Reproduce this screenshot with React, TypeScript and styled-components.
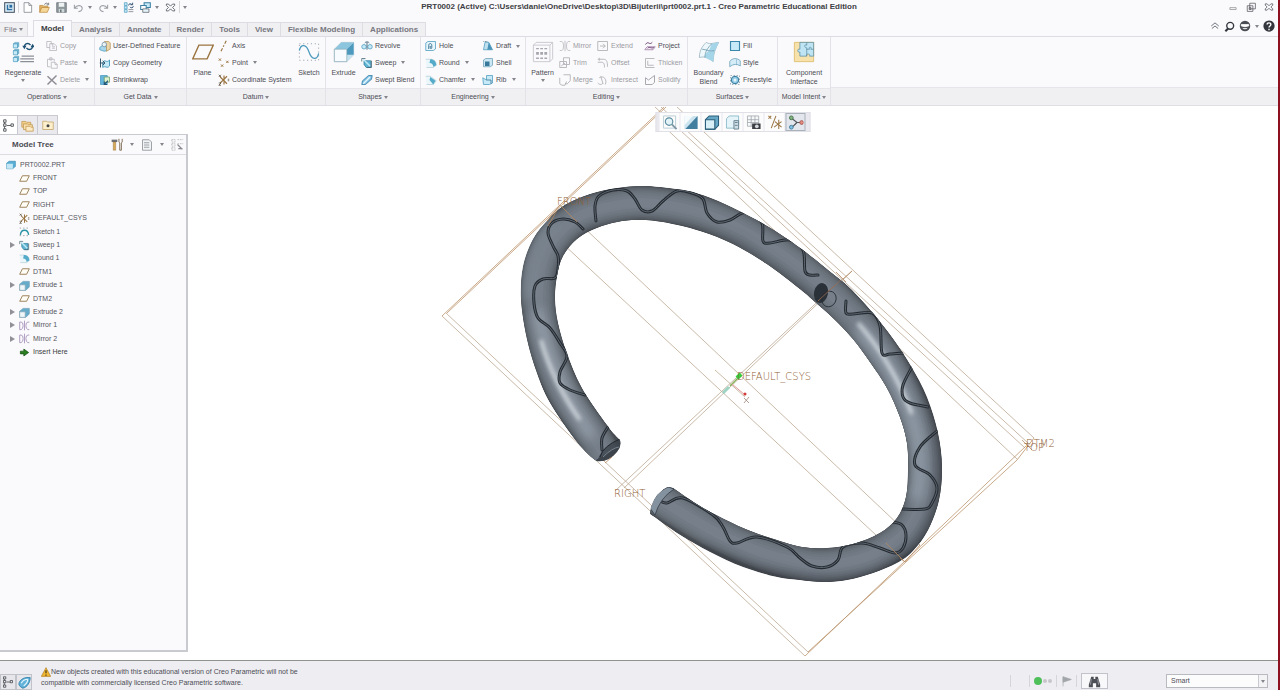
import React from 'react';
import styled, { createGlobalStyle } from 'styled-components';

const GlobalStyle = createGlobalStyle`
  * { box-sizing: border-box; }
  body { margin: 0; background: #fff; }
  button, select { font: inherit; color: inherit; }
`;

/* ---------- icons ---------- */

const Glyph = styled.svg<{ $size: number }>`
  display: block;
  flex: none;
  width: ${p => p.$size}px;
  height: ${p => p.$size}px;
  fill: none;
`;

const BLUE = '#4b9abd';
const LIGHT = '#c6eaf7';
const DARK = '#50555f';
const BROWN = '#9a7440';
const GREY = '#b2b2b8';

const drawings: Record<string, React.ReactNode> = {
  app: (<><rect x="1" y="1" width="14" height="14" fill="#dff0fa" stroke="#44515f" strokeWidth="1.5" /><rect x="4" y="4" width="8" height="8" fill="#2c6fa3" /><path d="M7 4v5h5" stroke="#fff" strokeWidth="1.5" /></>),
  newFile: <path d="M3 1h7l4 4v10H3zM10 1v4h4" fill="#fff" stroke="#70747c" />,
  open: (<><path d="M1 15V5h5l1 1h6v3" fill="#e0b368" stroke="#b98636" /><path d="M1 15l3-7h11l-3 7z" fill="#f6d79b" stroke="#b98636" /><path d="M8 4c1-3 4-3 5-1M14 1v3h-3" stroke={DARK} /></>),
  save: (<><path d="M1 1h14v14H1z" fill="#8d979c" stroke="#5e686d" /><path d="M4 1h8v6H4z" fill="#eef2f2" /><path d="M4 10h8v5H4z" fill="#cfd8d8" /><path d="M6 11h2v4H6z" fill="#5e686d" /></>),
  undo: <path d="M8 14c7-1 7-8 1-9C6 5 4 6 2 9M2 4v5h5" stroke="#9a9da3" strokeWidth="1.5" />,
  redo: <path d="M8 14C1 13 1 6 7 5c3 0 5 1 7 4M14 4v5H9" stroke="#9a9da3" strokeWidth="1.5" />,
  regenSmall: (<><path d="M2 1h4v4H2zM2 6h4v4H2zM2 11h4v4H2z" fill={LIGHT} stroke={BLUE} /><path d="M8 5c0-3 4-3 5-1M14 1v3h-3M15 6c0 3-4 3-5 1" stroke="#24476a" strokeWidth="1.3" /><path d="M8 11h7M8 14h7" stroke="#8b9097" strokeWidth="1.3" /></>),
  windows: (<><path d="M6 1h9v7H6z" fill={LIGHT} stroke="#3b7fa0" strokeWidth="1.5" /><path d="M1 5h8v6H1z" fill="#fff" stroke="#3b7fa0" strokeWidth="1.5" /><path d="M4 10h9v5H4z" fill="#e6f5fb" stroke={DARK} /></>),
  closeWin: (<><path d="M2 3h3l3 3 3-3h3v2l-3 3 3 3v2h-3l-3-3-3 3H2v-2l3-3-3-3z" stroke="#5a5e66" strokeWidth="1.3" /></>),
  minimize: <path d="M3 9h10v3H3z" stroke="#7a7a80" />,
  restore: <path d="M6 2h9v9H6zM2 6h9v9H2zM5 9h3v3H5z" stroke="#55555d" strokeWidth="1.2" />,
  chevrons: <path d="M2 8l6-5 6 5M3 12l5-4 5 4" stroke={DARK} strokeWidth="1.3" />,
  search: (<><circle cx="9" cy="7" r="5" stroke="#33363c" strokeWidth="2" /><path d="M6 11l-4 4" stroke="#33363c" strokeWidth="3" /></>),
  community: (<><circle cx="8" cy="8" r="7" fill="#4a4d53" /><path d="M3 6h10v2c-2 0-3 1-5 1S5 8 3 8zM5 11c2 1 4 1 6 0" fill="#fff" stroke="#fff" /></>),
  help: (<><circle cx="8" cy="8" r="7.5" fill="#33363c" /><path d="M5.500 6c0-3 5-3 5 0 0 2-2.500 2-2.500 4M8 11.500v2" stroke="#fff" strokeWidth="1.8" /></>),
  regenerate: (<><path d="M1 2h3v3H1zM1 7h3v3H1zM1 12h3v3H1z" fill={LIGHT} stroke={BLUE} strokeWidth=".5" /><path d="M1 2l1-1h3v3l-1 1V2zM1 7l1-1h3v3l-1 1V7zM1 12l1-1h3v3l-1 1v-3z" fill="#6fb2d0" stroke={BLUE} strokeWidth=".3" /><path d="M9 4.500c0-3 3-3.500 4.500-1.500M15 3.500c0 3-3 3.500-4.500 1.500" stroke="#1f5275" strokeWidth="1" /><path d="M7.500 3.500h3L9 6zM13.500 4.500h3L15 2z" fill="#1f5275" /><path d="M7 11h9M6 13h10M6 15h10" stroke="#8b9097" strokeWidth=".8" /></>),
  copy: <path d="M1 2h6v3h2v3M1 2v8h4M5 5h6l3 3v6H5zM8 9h4M8 11h4" stroke={GREY} />,
  paste: <path d="M2 3h9v3M2 3v10h4M5 1h3v3H5zM7 7h5l3 3v5H7zM12 7v3h3" stroke={GREY} />,
  del: <path d="M2 3l12 11M14 2L2 14" stroke="#8e8e94" strokeWidth="2" />,
  udf: (<><path d="M1 10l4-3 6 3v4l-4 1-6-2z" fill="#a6d6ec" stroke={BLUE} /><path d="M7 2h6l2 2v8l-5 3V5z" fill="#edd5a7" stroke="#b0935b" /><circle cx="7" cy="6" r="3" fill="#e9f1f6" stroke="#7090a8" /></>),
  copyGeom: (<><path d="M5 7c3-5 5 2 9-3v8c-3 4-6-1-9 2z" fill={LIGHT} stroke={BLUE} strokeWidth="1.300" /><path d="M2 2v12M1 8h6M5 5l3 3-3 3" stroke="#33566e" strokeWidth="1.300" /></>),
  shrink: (<><path d="M2 2h9v12H2z" fill="#65b5dc" stroke={BLUE} /><path d="M7 4h7v7H7z" fill="#def1cf" stroke="#6c9a67" /><path d="M12 9l-5 5M11 14H7v-4" stroke="#24587a" strokeWidth="1.500" /></>),
  plane: <path d="M5 3h10.500L11 13H.500z" stroke={BROWN} />,
  planeSmall: <path d="M5 4h10l-4 8H1z" stroke="#9b8058" strokeWidth="1.400" fill="#fffdf5" />,
  axis: <path d="M11 1L9 5M8 7L7 9M6 11l-2 4" stroke={BROWN} strokeWidth="1.500" />,
  point: <path d="M1 2l3 3M4 2L1 5M11 5l3 3M14 5l-3 3M4 10l3 3M7 10l-3 3" stroke={BROWN} strokeWidth="1.300" />,
  csys: (<><path d="M8 2v12M3 4l9 9M12 3L3 12" stroke={BROWN} strokeWidth="1.500" /><path d="M1 1l3 3M4 1L1 4M13 7h2M13 9h2M1 12h3l-3 3h3" stroke="#54462e" /></>),
  sketch: (<><path d="M1 2h14v12H1z" stroke="#8a929c" strokeWidth=".6" strokeDasharray=".8 2" /><path d="M1 7c1-5 5-5 7 1s6 6 7 1" stroke={BLUE} strokeWidth=".9" /></>),
  sketchSmall: (<><path d="M2 13C3 4 13 4 14 13" stroke="#2a93a5" strokeWidth="2" /><path d="M1 3h14M1 14h14" stroke="#778" strokeDasharray="2 3" /></>),
  extrude: (<><path d="M1 6l5-5h9v9l-5 5H1z" fill="#dceff7" stroke="#9fb8c4" strokeWidth=".5" /><path d="M6 1h9l-5 5H1z" fill="#8cc5de" /><path d="M15 1v9l-5 5V6z" fill="#c3e2ee" /><path d="M15 1v9h-5V6z" fill="#4d99bd" /><path d="M1 6h9v9H1z" fill="#f7fbfd" stroke="#8ba9b7" strokeWidth=".5" /></>),
  extrudeSmall: (<><path d="M1 6l5-4h9v8l-5 5H1z" fill="#67abca" stroke="#6b9fb8" /><path d="M1 7h8v8H1z" fill="#f0f7fa" stroke="#8aa7b5" /></>),
  revolve: (<><circle cx="4" cy="9" r="3" fill={LIGHT} stroke={BLUE} /><circle cx="12" cy="9" r="3" fill={LIGHT} stroke={BLUE} /><path d="M8 3v10M5 4c1-2 5-2 6 0" stroke="#43627a" strokeWidth="1.200" /></>),
  sweep: (<><path d="M4 5h9v9H7l-3-4z" fill="#5fb4d4" stroke="#2f7c9c" /><path d="M3 3l9 9" stroke="#bfe9f6" strokeWidth="2" /><path d="M1 2h5M1 2v4M14 5v9H8" stroke="#44606f" /></>),
  blend: (<><path d="M1 14l1-5L10 2h5l-1 5-8 7z" fill="#7fbfe0" stroke="#2f78a4" /><path d="M3 13l9-9" stroke="#e8f7fd" strokeWidth="2" /></>),
  hole: (<><path d="M1 4l3-2h10v10l-3 2H1z" fill="#e6f6fc" stroke={BLUE} /><path d="M5 12V7c0-3 4-3 4 0v3c0 2-2 2-2 0V8" stroke="#2d6a8c" strokeWidth="1.200" /></>),
  round: (<><path d="M1 3h6c5 0 8 3 8 8l-4 3H2" fill="#eaf6fa" stroke="#9fc2cf" strokeWidth=".8" /><path d="M7 3c5 0 8 3 8 8l-4 2c0-3-2-5-5-5z" fill="#54abc9" /></>),
  chamfer: (<><path d="M1 3h6l8 6-4 5H2" fill="#eaf6fa" stroke="#9fc2cf" strokeWidth=".8" /><path d="M7 4l7 5-3 5-5-6z" fill="#54abc9" /></>),
  draft: (<><path d="M2 13l2-10h5l5 10z" fill="#bfe0ef" stroke={BLUE} /><path d="M9 3l5 10H7z" fill="#4993b9" /><path d="M2 2h6" stroke="#39586c" strokeDasharray="1 1" /></>),
  shell: (<><path d="M2 4l3-2h9v9l-3 2H2z" fill="#cbe7f3" stroke="#6d9eb5" /><path d="M4 6h6v6H4z" fill="#38799b" /></>),
  rib: (<><path d="M1 5l5 3V2h8v10l-4 2H2z" fill={LIGHT} stroke={BLUE} /><path d="M6 8h6v5" stroke="#2d6a8c" /></>),
  pattern: (<><path d="M1 3l2-2h12v12l-2 2H1zM1 3h12v12M13 3l2-2" stroke="#c1c1c8" strokeWidth=".6" /><path d="M3 5h2v1H3zM6 5h2v1H6zM9 5h2v1H9zM3 8h2v2H3zM6 8h2v2H6zM9 8h2v2H9zM3 12h2v1H3zM6 12h2v1H6zM9 12h2v1H9z" fill="#a6a6ae" /></>),
  mirrorG: <path d="M1 2h2q3 0 3 6t-3 6H1M15 2h-2q-3 0-3 6t3 6h2M8 1v14" stroke={GREY} />,
  mirrorP: <path d="M1 3h2q3 0 3 5t-3 6H1zM15 3h-2q-3 0-3 5t3 6h2M8 1v14" stroke="#9a83b0" strokeWidth="1.100" />,
  extend: <path d="M1 2h13v12H1zM4 8h7M8 5l3 3-3 3" stroke={GREY} strokeWidth="1.200" />,
  trim: <path d="M6 1h8v9H6zM1 6h9v8H1zM3 12l5-4" stroke={GREY} strokeWidth="1.200" />,
  offset: <path d="M1 3h8c4 0 5 4 5 10M1 7h5c3 0 4 2 4 7M3 1v4" stroke={GREY} strokeWidth="1.200" />,
  merge: <path d="M6 1h9v8l-4 4H8M1 5v8l3 2h4l2-5" stroke={GREY} strokeWidth="1.200" />,
  intersect: <path d="M3 5c6-4 11 3 8 9M1 12c3 3 6 2 7 0M5 3l3 10" stroke={GREY} strokeWidth="1.200" />,
  project: (<><path d="M1 13l3-4h11l-3 4z" fill="#f3ebf5" stroke="#9b79a3" /><path d="M2 6c4-6 5 2 9-3M5 11c2-3 5 1 8-1" stroke="#67416f" strokeWidth="1.300" /></>),
  thicken: <path d="M14 2H2v12h12M5 5v6h8" stroke={GREY} strokeWidth="1.200" />,
  solidify: <path d="M2 5l4 3 8-6v9l-3 3H2z" stroke="#9e9ea6" strokeWidth="1.200" />,
  boundary: (<><path d="M1 12C1 6 4 3 6 1c3 2 6 0 9 0-2 4-4 8-4 14-3-3-6-4-10-3z" fill="#eef8fb" stroke="#8ba9b8" strokeWidth=".5" /><path d="M8 7c2 1 4 0 5-1l2-5c-3 0-4 1-5 1zM5 12c0-2 1-4 3-5l4 0-1 8z" fill="#a5d5e8" /><path d="M3 6c3 0 5 2 9 1M5 12c0-4 2-7 5-10" stroke="#578ba5" strokeWidth=".5" /></>),
  fill: <path d="M2 2h12v12H2z" fill={LIGHT} stroke="#3b87a9" strokeWidth="1.500" />,
  style: (<><path d="M1 13V6c3-5 10-5 14-1v7c-4-3-9-3-14 1z" fill="#d6edf7" stroke="#639ab5" /><path d="M10 3v8" stroke="#639ab5" strokeWidth=".6" /></>),
  freestyle: (<><path d="M2 2h12v12H2z" stroke="#8598a5" strokeDasharray="2 2" /><circle cx="8" cy="8" r="5" fill="#92cbe5" stroke="#2d7396" strokeWidth="1.300" /><circle cx="8" cy="8" r="2" fill="#e8f6fb" /></>),
  component: (<><path d="M1 1h14v14H1z" fill="#f8e2ab" stroke="#dcb968" strokeWidth=".6" /><path d="M5 1h10v10h-3c1-2-3-2-2 0H5V8c-2 1-2-3 0-2z" fill="#bfe5f4" stroke="#53849a" strokeWidth=".5" /><path d="M10 1v2c-2-1-2 2 0 2v6M10 6h2c-1-2 2-2 1 0h2" stroke="#53849a" strokeWidth=".5" /></>),
  treeTab: <path d="M2 1h3v3H2zM2 6h3v3H2zM2 12h3v3H2zM11 6h3v3h-3zM3 4v2M3 9v3M6 8h5" stroke="#3e4248" strokeWidth="1" />,
  folders: (<><path d="M1 3h5l1 1h5v6H1z" fill="#f3d08e" stroke="#c39b58" /><path d="M3 6h5l1 1h5v6H3z" fill="#fae0ab" stroke="#c39b58" /><path d="M6 9h5l1 1h3v5H6z" fill="#fdebc6" stroke="#c39b58" /></>),
  favorites: (<><path d="M1 3h5l1 1h8v10H1z" fill="#fdf0cd" stroke="#c0a263" /><circle cx="8" cy="9" r="2" fill="#444" /></>),
  tools: (<><path d="M2 2h7v3H2z" fill="#6d7074" /><path d="M4 5h3v10H4z" fill="#d8a95a" stroke="#8a6528" strokeWidth=".5" /><path d="M11 1v4l1 1v9h2V6l1-1V1" stroke="#77634a" strokeWidth="1.100" /></>),
  settings: <path d="M2 1h9l3 3v11H2zM4 5h7M4 8h7M4 11h7" fill="#f1f3f4" stroke="#82878d" />,
  filter: (<><path d="M1 2h4v3H1zM1 7h4v3H1zM1 12h4v3H1zM8 2h7M8 7h7" stroke="#b5b5bb" strokeDasharray="2 1" /><path d="M8 8l6 6M9 13h5" stroke="#88888e" strokeWidth="1.500" /></>),
  part: (<><path d="M1 5l4-3h10v8l-4 4H1z" fill="#58aed5" stroke="#3587ae" /><path d="M1 6h10v8H1z" fill="#c3e7f5" /></>),
  insert: <path d="M2 6h5V3l7 5-7 5v-3H2z" fill="#2a7f21" stroke="#124d0d" />,
  zoomFit: (<><path d="M1 1h13v13H1z" stroke="#b9ccd4" /><circle cx="7" cy="7" r="4" fill="#e2f3f8" stroke="#5a8c9e" strokeWidth="1.200" /><path d="M10 10l5 5" stroke="#7f98a5" strokeWidth="2" /></>),
  repaint: (<><path d="M1 1h14v14H1z" fill="#cbe4ef" /><path d="M15 1v14H2z" fill="#437f9f" /><path d="M1 1h9L1 11z" fill="#f5fafc" /></>),
  shade: (<><path d="M1 5l4-4h10v10l-4 4H1z" fill="#68a8c7" stroke="#2b5f7b" strokeWidth="1.200" /><path d="M1 5h10v10H1z" fill="#d8eff8" stroke="#2b5f7b" strokeWidth="1.200" /></>),
  views: (<><path d="M1 4l3-3h10v10l-3 3H1z" fill="#e4f4f9" stroke="#8dbccd" /><path d="M9 6h5v9H9zM10 8h3M10 11h3" fill="#d0dfe5" stroke="#65808e" /></>),
  viewMgr: (<><path d="M1 1h12v11H1zM1 5h12M5 1v11M1 8h12M9 1v11" fill="#f8fafa" stroke="#9ba2a8" strokeWidth=".8" /><path d="M6 9h9v6H6z" fill="#3b3e44" /><circle cx="11" cy="12" r="2" fill="#d5d8da" /></>),
  datums: <path d="M1 1l3 3M4 1L1 4M9 1L4 14M12 5v10M8 7l7 6M15 7l-8 6" stroke={BROWN} strokeWidth="1.100" />,
  spin: (<><path d="M4 4l5 4h5M9 8l-5 5" stroke="#53575d" strokeWidth="1.300" /><circle cx="3" cy="3" r="2" fill="#7db87b" stroke="#4b7050" /><circle cx="14" cy="8" r="2" fill="#e58c82" stroke="#a3564f" /><circle cx="3" cy="13" r="2" fill="#82c0e2" stroke="#4a7f9f" /></>),
  warn: (<><path d="M8 1l7.500 14H.500z" fill="#f2b632" stroke="#a8781c" /><path d="M8 5v5M8 12v2" stroke="#3b2f12" strokeWidth="1.800" /></>),
  browser: (<><path d="M1 10C2 4 8 1 15 2c0 6-4 12-9 13-2-1-4-2-5-5z" fill="#62b2da" stroke="#2a7ba5" /><path d="M4 9c2-4 5-5 8-5M7 12c3-2 5-4 5-8" stroke="#e5f6fd" strokeWidth="1.500" /></>),
  flag: <path d="M3 1v14M3 1l12 4-12 4z" fill="#a2a5a9" stroke="#a2a5a9" />,
  binoculars: (<><path d="M4 2h3v3h2V2h3l3 10v3h-5v-5H6v5H1v-3z" fill="#4c4f55" /><path d="M4 5l-1 7M12 5l1 7" stroke="#a4a8ae" /></>),
};

const Icon = ({ name, size = 12 }: { name: string; size?: number }) => (
  <Glyph viewBox="0 0 16 16" $size={size} aria-hidden="true">{drawings[name]}</Glyph>
);

const Caret = styled.span`
  flex: none;
  width: 0;
  height: 0;
  border: 2px solid transparent;
  border-top: 3px solid #85858c;
  border-bottom: 0;
`;

/* ---------- frame ---------- */

const Window = styled.div`
  display: flex;
  flex-direction: column;
  min-height: 100vh;
  border-right: 2px solid #8d1021;
  background: #fafafc;
  color: #4c4c54;
  font: 7px/10px "Liberation Sans", Arial, sans-serif;
`;

const TitleBar = styled.header`
  display: grid;
  grid-template-columns: 1fr auto 1fr;
  align-items: center;
  height: 14px;
  padding: 0 4px;
`;

const Title = styled.h1`
  margin: 0;
  font-size: 8px;
  line-height: 12px;
  font-weight: bold;
  color: #3e3e44;
`;

const Divider = styled.span<{ $space?: number }>`
  width: 1px;
  height: 12px;
  margin-right: ${p => p.$space ?? 0}px;
  background: #d5d5da;
`;

const QuickBar = styled.div`
  display: flex;
  align-items: center;
  gap: 6px;

  & > ${Divider} { margin: 0 -3px; }
`;

const WindowBar = styled.div`
  display: flex;
  justify-content: flex-end;
  align-items: center;
  gap: 8px;
`;

const PlainButton = styled.button`
  display: flex;
  align-items: center;
  gap: 4px;
  padding: 0;
  border: 0;
  background: none;
`;

const TabRow = styled.div`
  display: flex;
  align-items: flex-end;
  height: 23px;
  border-bottom: 1px solid #dcdce2;
`;

const TabList = styled.nav`
  display: flex;
  align-items: flex-end;
  flex: 1;
`;

const Tab = styled.button<{ $active?: boolean; $file?: boolean }>`
  display: flex;
  align-items: center;
  gap: 2px;
  height: ${p => (p.$active ? 17 : 14)}px;
  margin: 0 ${p => (p.$file ? 5 : 0)}px ${p => (p.$active ? -1 : 0)}px 0;
  padding: 0 ${p => (p.$file ? 4 : 7)}px;
  border: 1px solid #dcdce2;
  border-width: 1px 1px 0 ${p => (p.$active ? 1 : 0)}px;
  background: ${p => (p.$active ? '#fafafc' : '#f0f0f3')};
  color: ${p => (p.$active ? '#3c3c42' : '#77777f')};
  font-size: 8px;
  font-weight: ${p => (p.$file ? 'normal' : 'bold')};
`;

const HelpBar = styled.div`
  display: flex;
  align-items: center;
  align-self: center;
  gap: 4px;
  padding: 2px 3px 0 0;
`;

/* ---------- ribbon ---------- */

const Ribbon = styled.div`
  display: flex;
  height: 69px;
  border-bottom: 1px solid #dedee4;
`;

const Group = styled.section<{ $width: number }>`
  display: flex;
  flex-direction: column;
  flex: none;
  width: ${p => p.$width}px;
  border-right: 1px solid #e2e2e8;
`;

const GroupBody = styled.div<{ $cols: string }>`
  flex: 1;
  display: grid;
  grid-template-columns: ${p => p.$cols};
  padding-top: 1px;
`;

const GroupLabel = styled.button`
  display: flex;
  justify-content: center;
  align-items: center;
  gap: 2px;
  height: 17px;
  padding: 0;
  border: 0;
  border-top: 1px solid #e6e6ea;
  background: #f0f0f3;
  white-space: nowrap;
`;

const RibbonRest = styled.div`
  flex: 1;
  display: flex;
  align-items: flex-end;

  &::after {
    content: "";
    flex: 1;
    height: 17px;
    border-top: 1px solid #e6e6ea;
    background: #f0f0f3;
  }
`;

const Stack = styled.div`
  display: grid;
  grid-template-rows: repeat(3, 1fr);
`;

const Command = styled.button<{ $off?: boolean }>`
  display: flex;
  align-items: center;
  gap: 2px;
  padding: 0;
  border: 0;
  background: none;
  white-space: nowrap;
  color: ${p => (p.$off ? '#9a9aa2' : 'inherit')};

  ${Caret} { margin-left: 3px; }
`;

const BigCommand = styled.button`
  display: flex;
  flex-direction: column;
  align-items: center;
  padding: 3px 0 0;
  border: 0;
  background: none;
  line-height: 9px;
`;

const BigText = styled.span`
  margin: 5px 0 2px;
`;

type Cmd = [icon: string, label: string, caret?: boolean];
type Part = { big: string; lines: string[]; caret?: boolean } | { list: Cmd[]; off?: boolean };

const groups: { label: string; width: number; cols: string; parts: Part[] }[] = [
  { label: 'Operations', width: 95, cols: '46px 1fr', parts: [
    { big: 'regenerate', lines: ['Regenerate'], caret: true },
    { list: [['copy', 'Copy'], ['paste', 'Paste', true], ['del', 'Delete', true]], off: true },
  ] },
  { label: 'Get Data', width: 92, cols: '4px 1fr', parts: [
    { list: [] },
    { list: [['udf', 'User-Defined Feature'], ['copyGeom', 'Copy Geometry'], ['shrink', 'Shrinkwrap']] },
  ] },
  { label: 'Datum', width: 139, cols: '31px 1fr 32px', parts: [
    { big: 'plane', lines: ['Plane'] },
    { list: [['axis', 'Axis'], ['point', 'Point', true], ['csys', 'Coordinate System']] },
    { big: 'sketch', lines: ['Sketch'] },
  ] },
  { label: 'Shapes', width: 95, cols: '35px 1fr', parts: [
    { big: 'extrude', lines: ['Extrude'] },
    { list: [['revolve', 'Revolve'], ['sweep', 'Sweep', true], ['blend', 'Swept Blend']] },
  ] },
  { label: 'Engineering', width: 105, cols: '4px 57px 1fr', parts: [
    { list: [] },
    { list: [['hole', 'Hole'], ['round', 'Round', true], ['chamfer', 'Chamfer', true]] },
    { list: [['draft', 'Draft', true], ['shell', 'Shell'], ['rib', 'Rib', true]] },
  ] },
  { label: 'Editing', width: 162, cols: '33px 38px 47px 1fr', parts: [
    { big: 'pattern', lines: ['Pattern'], caret: true },
    { list: [['mirrorG', 'Mirror'], ['trim', 'Trim'], ['merge', 'Merge']], off: true },
    { list: [['extend', 'Extend'], ['offset', 'Offset'], ['intersect', 'Intersect']], off: true },
    { list: [['project', 'Project'], ['thicken', 'Thicken'], ['solidify', 'Solidify']] },
  ] },
  { label: 'Surfaces', width: 90, cols: '41px 1fr', parts: [
    { big: 'boundary', lines: ['Boundary', 'Blend'] },
    { list: [['fill', 'Fill'], ['style', 'Style'], ['freestyle', 'Freestyle']] },
  ] },
  { label: 'Model Intent', width: 53, cols: '1fr', parts: [
    { big: 'component', lines: ['Component', 'Interface'] },
  ] },
];

const disabledAlone = ['Thicken', 'Solidify'];

/* ---------- model tree ---------- */

const Body = styled.main`
  flex: 1;
  display: flex;
  min-height: 0;
  background: #fff;
`;

const Side = styled.aside`
  display: flex;
  flex-direction: column;
  flex: none;
  width: 188px;
  padding: 9px 0 8px;
`;

const SideTabs = styled.div`
  display: flex;
  height: 19px;
`;

const SideTab = styled.button<{ $active?: boolean }>`
  display: grid;
  place-items: center;
  width: ${p => (p.$active ? 18 : 20)}px;
  padding: 0;
  border: 1px solid #c9c9d0;
  border-width: 1px 1px 0 0;
  background: ${p => (p.$active ? '#fff' : '#eaeaee')};
`;

const Panel = styled.div`
  flex: 1;
  border: 1px solid #c9c9d0;
  border-width: 1px 2px 2px 0;
  background: #fafafc;
`;

const PanelHead = styled.div`
  display: flex;
  align-items: center;
  gap: 7px;
  height: 20px;
  padding: 0 2px 0 12px;
  border-bottom: 1px solid #dcdce2;
`;

const PanelTitle = styled.h2`
  flex: 1;
  margin: 0;
  font-size: 8px;
`;

const TreeList = styled.ul`
  display: grid;
  grid-auto-rows: 1fr;
  height: 201px;
  margin: 3px 0 0;
  padding: 0;
  list-style: none;
`;

const TreeItem = styled.li<{ $root?: boolean; $strong?: boolean }>`
  display: grid;
  grid-template-columns: ${p => (p.$root ? '4px 12px 1fr' : '8px 7px 12px 1fr')};
  align-items: center;
  column-gap: 2px;
  white-space: nowrap;
  color: ${p => (p.$strong ? '#3c3c42' : '#55555d')};
`;

const Expander = styled.span<{ $shown: boolean }>`
  width: 0;
  height: 0;
  border: 3px solid transparent;
  border-left: 5px solid ${p => (p.$shown ? '#909098' : 'transparent')};
  border-right: 0;
`;

const tree: { icon: string; label: string; open?: boolean }[] = [
  { icon: 'planeSmall', label: 'FRONT' },
  { icon: 'planeSmall', label: 'TOP' },
  { icon: 'planeSmall', label: 'RIGHT' },
  { icon: 'csys', label: 'DEFAULT_CSYS' },
  { icon: 'sketchSmall', label: 'Sketch 1' },
  { icon: 'sweep', label: 'Sweep 1', open: true },
  { icon: 'round', label: 'Round 1' },
  { icon: 'planeSmall', label: 'DTM1' },
  { icon: 'extrudeSmall', label: 'Extrude 1', open: true },
  { icon: 'planeSmall', label: 'DTM2' },
  { icon: 'extrudeSmall', label: 'Extrude 2', open: true },
  { icon: 'mirrorP', label: 'Mirror 1', open: true },
  { icon: 'mirrorP', label: 'Mirror 2', open: true },
  { icon: 'insert', label: 'Insert Here' },
];

/* ---------- viewport ---------- */

const Viewport = styled.section`
  position: relative;
  flex: 1;
  display: flex;
  min-width: 0;
`;

const Scene = styled.svg`
  flex: 1;
  min-width: 0;
  width: 100%;
`;

const SceneText = styled.text`
  font: 200 10px "DejaVu Sans", sans-serif;
  fill: #8f6136;
`;

const FloatBar = styled.div`
  position: absolute;
  top: 6px;
  left: 50%;
  display: flex;
  gap: 1px;
  height: 20px;
  padding: 0 4px 0 3px;
  border: 1px solid #e0e0e6;
  background: #e8e8ee;
  transform: translateX(-50%);
`;

const FloatButton = styled.button<{ $on?: boolean }>`
  display: grid;
  place-items: center;
  width: 20px;
  padding: 0;
  border: ${p => (p.$on ? '1px solid #a9b1bb' : '0')};
  background: ${p => (p.$on ? '#e3e6ec' : '#fcfcfd')};
`;

type Pt = [number, number];

/* Catmull-Rom curve through the points, as cubic segments */
const curve = (pts: Pt[], lead = 'M') => {
  let d = `${lead}${pts[0][0]} ${pts[0][1]}`;
  for (let i = 0; i < pts.length - 1; i++) {
    const a = pts[Math.max(i - 1, 0)];
    const b = pts[i];
    const c = pts[i + 1];
    const e = pts[Math.min(i + 2, pts.length - 1)];
    d += `C${b[0] + (c[0] - a[0]) / 6} ${b[1] + (c[1] - a[1]) / 6} ${c[0] - (e[0] - b[0]) / 6} ${c[1] - (e[1] - b[1]) / 6} ${c[0]} ${c[1]}`;
  }
  return d;
};

const outer: Pt[] = [[596, 461], [577, 442], [550, 403], [537, 373], [527, 339], [521, 299], [523, 266], [533, 239], [547, 221], [563, 206], [590, 194], [617, 188], [643, 186], [677, 189], [703, 195], [733, 208], [767, 226], [800, 248], [833, 274], [850, 288], [873, 313], [894, 340], [911, 366], [927, 397], [938, 433], [942, 467], [939, 500], [928, 530], [913, 551], [897, 563], [873, 573], [847, 580], [823, 582], [800, 580], [777, 577], [743, 567], [710, 552], [680, 535], [650, 514]];
const inner: Pt[] = [[673, 488], [703, 508], [743, 528], [777, 540], [802, 547], [827, 548], [853, 544], [880, 533], [897, 518], [906, 497], [908, 470], [907, 443], [900, 417], [887, 388], [870, 362], [853, 339], [833, 318], [815, 302], [800, 289], [767, 264], [733, 244], [700, 231], [663, 222], [637, 220], [617, 222], [597, 228], [577, 239], [563, 256], [557, 276], [555, 299], [558, 323], [567, 353], [582, 388], [607, 425], [620, 440]];
const center: Pt[] = [[604, 455], [592, 434], [568, 399], [552, 365], [542, 330], [538, 299], [541, 269], [549, 247], [562, 230], [580, 216], [605, 208], [639, 203], [670, 206], [701, 213], [734, 226], [767, 245], [800, 268], [833, 296], [862, 327], [886, 359], [907, 397], [921, 437], [925, 468], [922, 498], [912, 524], [896, 541], [867, 557], [826, 565], [793, 561], [760, 552], [723, 536], [692, 519], [658, 498]];

const RING = `${curve(outer)}L651 507Q656 492 668 487${curve(inner, 'L')}Q622 446 617 452Q608 463 596 461Z`;

const shades: [number, string][] = [[35, '#4b5056'], [33, '#555b62'], [31, '#5d646b'], [28, '#646b73'], [25, '#69717a'], [21, '#6e7680'], [16, '#727b85'], [10, '#767f8a']];

const grooves: Pt[][] = [
  [[596, 221], [595, 206], [599, 196], [613, 190], [627, 191], [635, 199], [642, 210], [652, 211], [663, 201], [677, 191], [692, 193], [703, 199], [707, 213], [717, 222], [730, 220], [742, 213], [750, 214], [762, 223], [763, 241], [770, 243], [790, 240], [803, 250], [805, 271], [810, 275], [818, 275]],
  [[583, 229], [575, 222], [563, 219], [552, 223], [548, 233], [553, 246], [558, 256], [558, 269], [555, 278], [543, 279], [535, 286], [534, 303], [538, 318], [550, 328], [560, 343], [567, 356], [560, 372], [560, 383], [570, 390], [585, 395]],
  [[608, 427], [602, 438], [602, 450]],
  [[846, 301], [846, 313], [853, 314], [872, 313], [880, 326], [882, 353], [890, 354], [903, 353]],
  [[912, 367], [903, 385], [903, 397], [910, 403], [928, 407]],
  [[937, 431], [920, 447], [915, 465], [930, 475], [937, 488], [932, 503], [925, 509], [903, 509]],
  [[893, 522], [902, 525], [906, 535], [903, 548], [895, 553], [880, 548], [862, 543], [843, 547], [838, 560], [827, 567], [812, 566], [800, 558], [787, 547], [757, 537], [737, 543], [730, 541], [723, 527], [713, 515], [683, 498], [667, 503], [660, 501]],
];

const Model = () => (
  <Scene viewBox="188 106 1090 554" role="img" aria-label="Bracelet model with datum planes">
    <defs>
      <clipPath id="ring"><path d={RING} /></clipPath>
      <filter id="soft" x="-20%" y="-20%" width="140%" height="140%"><feGaussianBlur stdDeviation="2" /></filter>
      <filter id="wide" x="-20%" y="-20%" width="140%" height="140%"><feGaussianBlur stdDeviation="6" /></filter>
    </defs>
    <g fill="none" stroke="#bda893" strokeWidth=".8">
      <path d="M442 316L805 656M446 313L808 652M656 119L1017 459M655 107L1025 448M661 107L1028 443M677 107L1034 438" />
      <path d="M548 230L905 562M560 205L920 545M615 491L842 279M624 488L852 271M715 370L745 397" />
      <path d="M442 316L664 107M447 313L666 107M805 656L1026 446M808 652L1017 460L1034 438M1022 440L1032 450" stroke="#bd946c" />
    </g>
    <g clipPath="url(#ring)" fill="none">
      <path d={RING} fill="#464b51" />
      {shades.map(([w, c]) => <path key={w} d={curve(center)} stroke={c} strokeWidth={w} />)}
      <path d="M558 285Q560 246 602 228Q660 212 740 246L815 300" stroke="#3c424a" strokeWidth="9" opacity=".4" filter="url(#wide)" />
      <path d="M910 350Q945 420 942 480Q935 550 870 578Q800 595 700 552" stroke="#30363e" strokeWidth="10" opacity=".5" filter="url(#wide)" />
      <path d="M528 300Q522 250 556 218" stroke="#8995a2" strokeWidth="12" opacity=".6" filter="url(#wide)" />
      <path d="M537 310Q548 370 592 438" stroke="#a5b0bc" strokeWidth="10" opacity=".7" filter="url(#wide)" />
      <path d="M858 328Q905 380 917 440Q922 480 914 500" stroke="#98a4b1" strokeWidth="12" opacity=".8" filter="url(#wide)" />
      <path d="M541 340Q552 380 580 420" stroke="#eef2f6" strokeWidth="3" opacity=".9" filter="url(#soft)" />
      <path d="M858 323Q892 362 912 414" stroke="#eef2f6" strokeWidth="3" opacity=".9" filter="url(#soft)" />
      {grooves.map((g, i) => (
        <g key={i} strokeLinecap="round">
          <path d={curve(g)} stroke="#262b31" strokeWidth="3" />
          <path d={curve(g)} stroke="#5c6670" strokeWidth="1" />
        </g>
      ))}
      <path d="M597 462Q600 448 620 439L625 450L605 468Z" fill="#3a4048" opacity=".75" />
      <path d="M600 457Q603 446 620 439" stroke="#20252b" />
      <path d="M603 457Q612 448 619 447" stroke="#76818c" />
      <path d="M650 508Q655 492 668 487L674 489Q660 498 655 515Z" fill="#8492a0" stroke="#363e47" strokeWidth=".8" />
      <ellipse cx="821" cy="293" rx="7" ry="10" fill="#2b3138" transform="rotate(12 821 293)" />
      <ellipse cx="829" cy="299" rx="7" ry="8" stroke="#252b32" strokeWidth=".8" transform="rotate(25 829 299)" />
      <path d="M818 301L834 286M832 288L843 278" stroke="#9c6c50" strokeWidth=".8" />
      <path d="M560 205L577 222M548 226L560 205M886 543L905 562L920 545" stroke="#b5875c" strokeWidth=".8" />
    </g>
    <path d="M547 221L560 205M900 558L905 562L920 545M836 272L846 282M843 279L852 271M605 463L612 457" fill="none" stroke="#b5875c" strokeWidth=".8" />
    <path d="M723 393L729 387" stroke="#9fd4c4" strokeWidth="3" />
    <path d="M730 386L738 378" stroke="#88b45c" strokeWidth="1.500" />
    <path d="M737 378L741 374" stroke="#35cf3c" strokeWidth="4" />
    <path d="M732 384L745 395" stroke="#e09a98" />
    <circle cx="745" cy="394" r="1.500" fill="#d33a3a" />
    <path d="M744 398L749 403M749 397L744 403" stroke="#9f8778" strokeWidth=".8" />
    <SceneText x="557" y="205">FRONT</SceneText>
    <SceneText x="737" y="380">DEFAULT_CSYS</SceneText>
    <SceneText x="614" y="497">RIGHT</SceneText>
    <SceneText x="1026" y="447">DTM2</SceneText>
    <SceneText x="1024" y="451">TOP</SceneText>
  </Scene>
);

/* ---------- status bar ---------- */

const StatusBar = styled.footer`
  display: flex;
  align-items: flex-end;
  height: 30px;
  border-top: 1px solid #8f948c;
  background: #eeeef2;
`;

const StatusButton = styled.button<{ $wide?: boolean }>`
  display: grid;
  place-items: center;
  width: ${p => (p.$wide ? 27 : 16)}px;
  height: 16px;
  padding: 0;
  border: 1px solid #c2c2ca;
  background: ${p => (p.$wide ? '#f8f8fa' : '#e6e6eb')};
`;

const Message = styled.p`
  flex: 1;
  margin: 0 0 2px 9px;
  line-height: 11px;
`;

const MessageLine = styled.span`
  display: flex;
  align-items: center;
`;

const StatusTools = styled.div`
  display: flex;
  align-items: center;
  gap: 4px;
  height: 16px;
  margin: 0 58px 1px 0;
`;

const Lights = styled.span`
  display: flex;
  align-items: center;
  gap: 1px;
`;

const Light = styled.i<{ $on?: boolean }>`
  width: ${p => (p.$on ? 8 : 4)}px;
  height: ${p => (p.$on ? 8 : 4)}px;
  border-radius: 50%;
  background: ${p => (p.$on ? '#4fbf5a' : '#c6c6cc')};
`;

const SelectBox = styled.label`
  display: flex;
  position: relative;
  width: 102px;
  height: 14px;
  margin: 0 10px 2px 0;
`;

const Select = styled.select`
  flex: 1;
  appearance: none;
  padding: 0 4px;
  border: 1px solid #b9b9c0;
  border-radius: 0;
  background: #fcfcfd;
`;

const SelectArrow = styled.span`
  position: absolute;
  top: 1px;
  right: 1px;
  bottom: 1px;
  display: grid;
  place-items: center;
  width: 9px;
  border-left: 1px solid #c9c9d0;
  background: #f3f3f6;
  pointer-events: none;
`;

const tabs = ['Model', 'Analysis', 'Annotate', 'Render', 'Tools', 'View', 'Flexible Modeling', 'Applications'];
const floatIcons = ['zoomFit', 'repaint', 'shade', 'views', 'viewMgr', 'datums', 'spin'];

const App = () => (
  <Window>
    <GlobalStyle />
    <TitleBar>
      <QuickBar>
        <PlainButton aria-label="Application menu"><Icon name="app" size={11} /></PlainButton>
        <Divider />
        <PlainButton aria-label="New"><Icon name="newFile" size={11} /></PlainButton>
        <PlainButton aria-label="Open"><Icon name="open" size={11} /></PlainButton>
        <PlainButton aria-label="Save"><Icon name="save" size={11} /></PlainButton>
        <PlainButton aria-label="Undo"><Icon name="undo" size={11} /><Caret /></PlainButton>
        <PlainButton aria-label="Redo"><Icon name="redo" size={11} /><Caret /></PlainButton>
        <PlainButton aria-label="Regenerate"><Icon name="regenSmall" size={11} /></PlainButton>
        <PlainButton aria-label="Windows"><Icon name="windows" size={11} /><Caret /></PlainButton>
        <PlainButton aria-label="Close window"><Icon name="closeWin" size={11} /></PlainButton>
        <Divider />
        <PlainButton aria-label="Customize"><Caret /></PlainButton>
      </QuickBar>
      <Title>PRT0002 (Active) C:\Users\danie\OneDrive\Desktop\3D\Bijuterii\prt0002.prt.1 - Creo Parametric Educational Edition</Title>
      <WindowBar>
        <PlainButton aria-label="Minimize"><Icon name="minimize" size={10} /></PlainButton>
        <PlainButton aria-label="Restore"><Icon name="restore" size={10} /></PlainButton>
        <PlainButton aria-label="Close"><Icon name="closeWin" size={10} /></PlainButton>
      </WindowBar>
    </TitleBar>
    <TabRow>
      <TabList>
        <Tab $file>File<Caret /></Tab>
        {tabs.map(t => <Tab key={t} $active={t === 'Model'}>{t}</Tab>)}
      </TabList>
      <HelpBar>
        <PlainButton aria-label="Collapse ribbon"><Icon name="chevrons" size={10} /></PlainButton>
        <PlainButton aria-label="Search"><Icon name="search" size={11} /></PlainButton>
        <PlainButton aria-label="Community"><Icon name="community" size={12} /><Caret /></PlainButton>
        <PlainButton aria-label="Help"><Icon name="help" size={12} /></PlainButton>
      </HelpBar>
    </TabRow>
    <Ribbon>
      {groups.map(g => (
        <Group key={g.label} $width={g.width}>
          <GroupBody $cols={g.cols}>
            {g.parts.map((p, i) => 'big' in p ? (
              <BigCommand key={i}>
                <Icon name={p.big} size={22} />
                <BigText>{p.lines.map((l, j) => <React.Fragment key={l}>{j > 0 && <br />}{l}</React.Fragment>)}</BigText>
                {p.caret && <Caret />}
              </BigCommand>
            ) : (
              <Stack key={i}>
                {p.list.map(([icon, label, caret]) => (
                  <Command key={label} $off={p.off || disabledAlone.includes(label)}>
                    <Icon name={icon} />{label}{caret && <Caret />}
                  </Command>
                ))}
              </Stack>
            ))}
          </GroupBody>
          <GroupLabel>{g.label}<Caret /></GroupLabel>
        </Group>
      ))}
      <RibbonRest />
    </Ribbon>
    <Body>
      <Side>
        <SideTabs>
          <SideTab $active aria-label="Model tree"><Icon name="treeTab" size={13} /></SideTab>
          <SideTab aria-label="Folder browser"><Icon name="folders" size={13} /></SideTab>
          <SideTab aria-label="Favorites"><Icon name="favorites" size={12} /></SideTab>
        </SideTabs>
        <Panel>
          <PanelHead>
            <PanelTitle>Model Tree</PanelTitle>
            <PlainButton aria-label="Tree tools"><Icon name="tools" size={13} /></PlainButton>
            <Caret />
            <PlainButton aria-label="Tree settings"><Icon name="settings" size={12} /></PlainButton>
            <Caret />
            <PlainButton aria-label="Tree filter"><Icon name="filter" size={13} /></PlainButton>
          </PanelHead>
          <TreeList>
            <TreeItem $root><span /><Icon name="part" size={10} />PRT0002.PRT</TreeItem>
            {tree.map(n => (
              <TreeItem key={n.label} $strong={n.label === 'Insert Here'}>
                <span /><Expander $shown={!!n.open} /><Icon name={n.icon} size={11} />{n.label}
              </TreeItem>
            ))}
          </TreeList>
        </Panel>
      </Side>
      <Viewport>
        <Model />
        <FloatBar>
          {floatIcons.map(n => <FloatButton key={n} $on={n === 'spin'} aria-label={n}><Icon name={n} size={15} /></FloatButton>)}
        </FloatBar>
      </Viewport>
    </Body>
    <StatusBar>
      <StatusButton aria-label="Toggle tree"><Icon name="treeTab" size={12} /></StatusButton>
      <StatusButton aria-label="Toggle browser"><Icon name="browser" size={13} /></StatusButton>
      <Message>
        <MessageLine><Icon name="warn" size={10} />New objects created with this educational version of Creo Parametric will not be</MessageLine>
        <MessageLine>compatible with commercially licensed Creo Parametric software.</MessageLine>
      </Message>
      <StatusTools>
        <Divider $space={14} />
        <Divider />
        <Lights><Light $on /><Light /><Light /></Lights>
        <Divider />
        <Icon name="flag" size={11} />
        <Divider />
        <StatusButton $wide aria-label="Find"><Icon name="binoculars" size={13} /></StatusButton>
      </StatusTools>
      <SelectBox>
        <Select aria-label="Selection filter" defaultValue="Smart"><option>Smart</option></Select>
        <SelectArrow><Caret /></SelectArrow>
      </SelectBox>
    </StatusBar>
  </Window>
);

export default App;
